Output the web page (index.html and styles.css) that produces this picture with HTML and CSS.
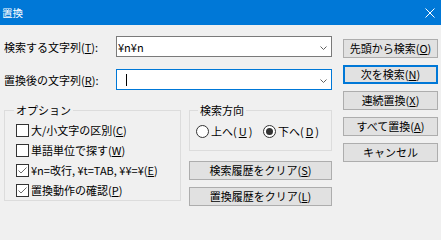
FILE: index.html
```html
<!DOCTYPE html>
<html lang="ja">
<head>
<meta charset="utf-8">
<title>置換</title>
<link rel="stylesheet" href="styles.css">
</head>
<body>
<div class="window">
  <div class="titlebar">
    <span class="title">置換</span>
    <svg class="close" width="10" height="10" viewBox="0 0 10 10"><path d="M0.5 0.5 L9.5 9.5 M9.5 0.5 L0.5 9.5" stroke="#fff" stroke-width="1" fill="none"/></svg>
  </div>
  <div class="content">
    <div class="main">
      <div class="field-row">
        <label class="field-label">検索する文字列(<u>T</u>):</label>
        <div class="combo">
          <span class="combo-text">¥n¥n</span>
          <svg class="chevron" width="7" height="4" viewBox="0 0 7 4"><path d="M0.5 0.5 L3.5 3.5 L6.5 0.5" stroke="#606060" stroke-width="1" fill="none"/></svg>
        </div>
      </div>
      <div class="field-row">
        <label class="field-label">置換後の文字列(<u>R</u>):</label>
        <div class="combo focused">
          <span class="caret"></span>
          <svg class="chevron" width="7" height="4" viewBox="0 0 7 4"><path d="M0.5 0.5 L3.5 3.5 L6.5 0.5" stroke="#606060" stroke-width="1" fill="none"/></svg>
        </div>
      </div>
      <div class="groups">
        <fieldset class="group options">
          <legend class="legend-options">オプション</legend>
          <div class="check-row"><span class="checkbox"></span><span>大/小文字の区別(<u>C</u>)</span></div>
          <div class="check-row"><span class="checkbox"></span><span>単語単位で探す(<u>W</u>)</span></div>
          <div class="check-row"><span class="checkbox checked"><svg width="11" height="11" viewBox="0 0 11 11"><path d="M1.5 5.5 L4 8 L9.5 2.5" stroke="#6f6f6f" stroke-width="1" fill="none"/></svg></span><span>¥n=改行, ¥t=TAB, ¥¥=¥(<u>E</u>)</span></div>
          <div class="check-row"><span class="checkbox checked"><svg width="11" height="11" viewBox="0 0 11 11"><path d="M1.5 5.5 L4 8 L9.5 2.5" stroke="#6f6f6f" stroke-width="1" fill="none"/></svg></span><span>置換動作の確認(<u>P</u>)</span></div>
        </fieldset>
        <div class="dir-col">
          <fieldset class="group direction">
            <legend class="legend-direction">検索方向</legend>
            <div class="radio-row">
              <span class="radio-item up"><span class="radio"></span>上へ(<u>U</u>)</span>
              <span class="radio-item"><span class="radio checked"></span>下へ(<u>D</u>)</span>
            </div>
          </fieldset>
          <button class="btn">検索履歴をクリア(<u>S</u>)</button>
          <button class="btn">置換履歴をクリア(<u>L</u>)</button>
        </div>
      </div>
    </div>
    <div class="side">
      <button class="btn">先頭から検索(<u>O</u>)</button>
      <button class="btn default">次を検索(<u>N</u>)</button>
      <button class="btn">連続置換(<u>X</u>)</button>
      <button class="btn">すべて置換(<u>A</u>)</button>
      <button class="btn">キャンセル</button>
    </div>
  </div>
</div>
</body>
</html>
```

FILE: styles.css
```css
html, body {
  margin: 0;
  padding: 0;
}

body {
  background: #f0f0f0;
  font-family: "Noto Sans CJK JP", "Noto Sans", sans-serif;
  font-size: 11px;
  color: #000;
  width: 441px;
  height: 211px;
  overflow: hidden;
}

.titlebar {
  height: 25px;
  background: #0078d7;
  color: #fff;
  display: flex;
  align-items: center;
  justify-content: space-between;
  padding: 0 6px 0 2px;
}

.title {
  font-size: 10.5px;
  line-height: 14px;
}

.close {
  display: block;
}

.content {
  display: flex;
  gap: 11px;
  padding: 11px 0 0 4px;
}

.main {
  width: 328px;
  display: flex;
  flex-direction: column;
}

.field-row {
  display: flex;
  align-items: center;
  height: 21px;
}

.field-row + .field-row {
  margin-top: 12px;
}

.field-label {
  width: 112px;
  line-height: 14px;
  white-space: nowrap;
}

.combo {
  width: 216px;
  height: 21px;
  box-sizing: border-box;
  border: 1px solid #7a7a7a;
  background: #fff;
  display: flex;
  align-items: center;
  padding: 0 4px 0 1px;
}

.combo.focused {
  border-color: #0078d7;
}

.combo-text {
  flex: 1;
  line-height: 14px;
}

.caret {
  width: 1px;
  height: 12px;
  background: #000;
  margin-left: 8px;
}

.chevron {
  display: block;
  margin-left: auto;
  margin-top: 2px;
}

.groups {
  display: flex;
  gap: 8px;
  margin-top: 13px;
  align-items: flex-start;
}

.group {
  margin: 0;
  border: 1px solid #dcdcdc;
  min-width: 0;
  box-sizing: border-box;
}

.group legend {
  line-height: 14px;
  padding: 0 2px;
}

.legend-options {
  margin-left: -2px;
}

.legend-direction {
  margin-left: 2px;
}

.options {
  width: 177px;
  padding: 3px 0 0 11px;
}

.check-row {
  display: flex;
  align-items: center;
  gap: 2px;
  height: 20px;
  line-height: 14px;
  white-space: nowrap;
}

.checkbox {
  width: 13px;
  height: 13px;
  box-sizing: border-box;
  border: 1px solid #333;
  background: #fff;
  flex: none;
}

.checkbox svg {
  display: block;
}

.dir-col {
  width: 143px;
  display: flex;
  flex-direction: column;
}

.direction {
  padding: 4px 0 9px 6px;
}

.radio-row {
  display: flex;
  align-items: center;
  height: 20px;
  line-height: 14px;
  white-space: nowrap;
}

.radio-item {
  display: flex;
  align-items: center;
  gap: 2px;
}

.radio-item.up {
  width: 67px;
}

.radio {
  width: 13px;
  height: 13px;
  box-sizing: border-box;
  border: 1px solid #333;
  border-radius: 50%;
  background: #fff;
  display: flex;
  align-items: center;
  justify-content: center;
  flex: none;
}

.radio.checked::after {
  content: "";
  width: 7px;
  height: 7px;
  border-radius: 50%;
  background: #333;
}

.btn {
  height: 19px;
  box-sizing: border-box;
  border: 1px solid #adadad;
  background: #e1e1e1;
  font: inherit;
  color: #000;
  padding: 0;
  line-height: 15px;
  text-align: center;
  white-space: nowrap;
}

.btn.default {
  border: 2px solid #0078d7;
}

.dir-col .btn {
  margin-top: 10px;
}

.dir-col .btn + .btn {
  margin-top: 7px;
}

.side {
  width: 95px;
  display: flex;
  flex-direction: column;
  gap: 7px;
  padding-top: 3px;
}
```
